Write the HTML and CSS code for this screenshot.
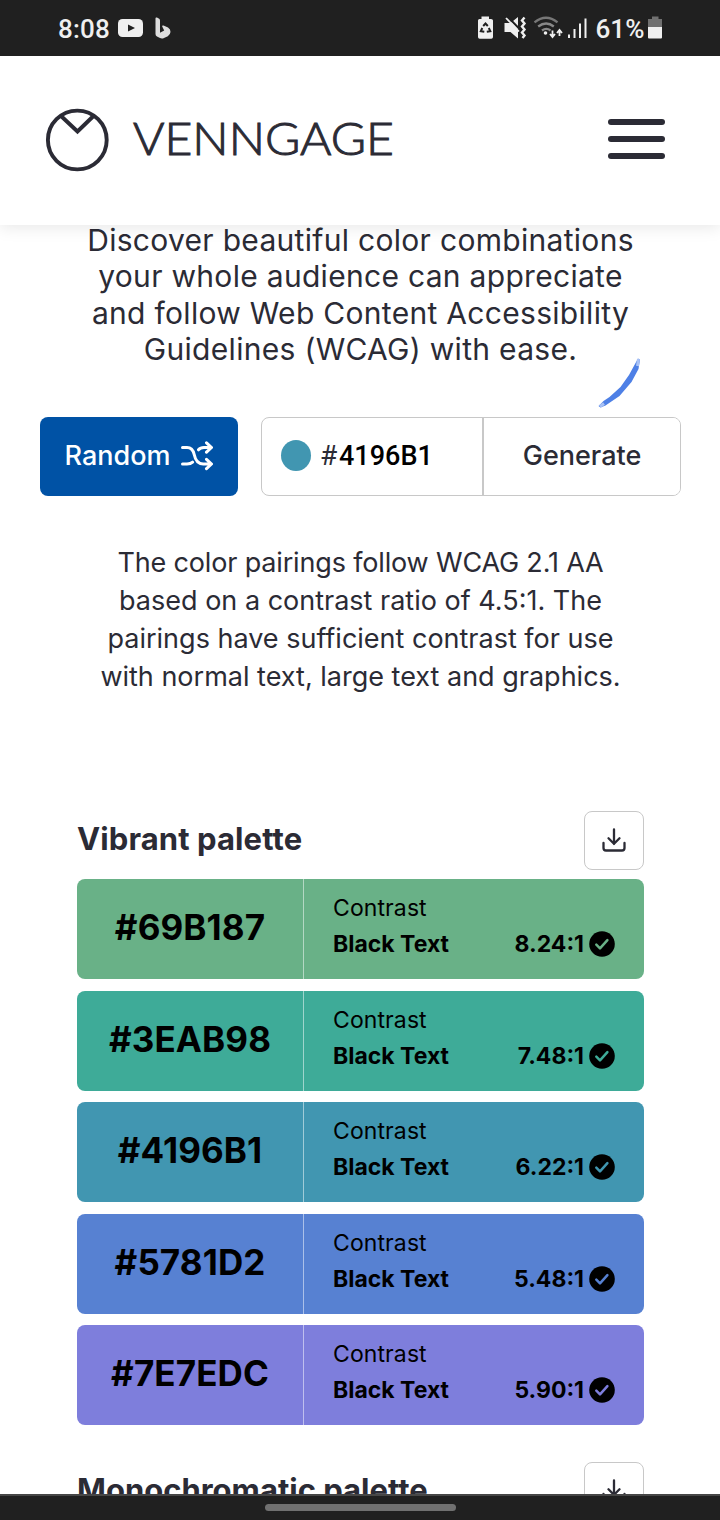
FILE: index.html
```html
<!DOCTYPE html>
<html lang="en">
<head>
<meta charset="utf-8">
<title>Accessible Color Palette Generator</title>
<link rel="stylesheet" href="styles.css">
</head>
<body>
<svg class="defs" width="0" height="0">
  <symbol id="check" viewBox="0 0 26 26"><circle cx="13" cy="13" r="12.8" fill="#000"/><path d="M7.300 13.600l3.700 3.700 7.400-8.200" fill="none" stroke="currentColor" stroke-width="2.500" stroke-linecap="round" stroke-linejoin="round"/></symbol>
  <symbol id="download" viewBox="0 0 24 24"><path d="M12 1.500V16M6.500 10.300L12 15.800l5.500-5.500M1.500 15v5q0 2.500 2.500 2.500h16q2.500 0 2.500-2.500v-5" fill="none" stroke="#2b2b35" stroke-width="2.300" stroke-linecap="round" stroke-linejoin="round"/></symbol>
</svg>
<div class="screen">
  <div class="status">
    <div class="status-left">
      <span class="clock">8:08</span>
      <svg class="yt" width="25" height="18" viewBox="0 0 25 18"><rect width="25" height="18" rx="4.500" fill="#efefef"/><path d="M10 5.500v7l7-3.500z" fill="#202020"/></svg>
      <svg class="bing" width="16" height="22" viewBox="0 0 16 22"><path d="M.5 1.500Q.5 0 2 .6l2.200 1.200Q5 2.300 5 3.500v12.200l4.200-2.300-2-3.800Q6.800 8 8.500 8.500l4.500 2q2.700 1.500 2.500 4.500-.3 2.800-2.700 4.200L9 21q-2 1-4 .1L2 19.500Q.5 18.500 .5 17z" fill="#dedede"/></svg>
    </div>
    <div class="status-right">
      <svg width="190" height="24" viewBox="476 16 190 24">
        <path d="M478 20.500q0-1.500 1.500-1.500h2v-2.500h7.500V19h2q2 0 2 1.500V37q0 1.700-1.700 1.700h-11.600Q478 38.700 478 37z" fill="#efefef"/>
        <path d="M483.200 26l2.300-2.500 2.300 2.500M482.300 28l-1.500 3.200 3.500 .6M488.800 28l1.500 3.200-3.500 .6" fill="none" stroke="#202020" stroke-width="2"/>
        <path d="M504.500 23h6l7.500-6v21.500l-7.500-6.500h-6z" fill="#efefef"/>
        <path d="M507.500 16.500l12 12.500" stroke="#202020" stroke-width="2"/>
        <path d="M506 18l13 13.500" stroke="#efefef" stroke-width="1.800"/>
        <path d="M524.500 17.500l-2.500 3 2.500 3-2.500 3 2.500 3-2.500 3 2.500 3-2 2.500" fill="none" stroke="#efefef" stroke-width="2.400"/>
        <g fill="none" stroke-width="2.300"><path d="M534.500 22.300q11.500-9 23 0" stroke="#777"/><path d="M538.200 26.500q8-6 15.600 0M542 30.500q4.500-3.300 8.500 0" stroke="#888"/></g>
        <circle cx="545.500" cy="33" r="1.800" fill="#efefef"/>
        <path d="M552.500 30.500v6M550 34l2.500 3 2.500-3M559.500 36v-5M557 33l2.500-3 2.500 3" fill="none" stroke="#efefef" stroke-width="1.800"/>
        <path d="M568 34.500h2V38h-2zM573.500 29h2v9h-2zM579 23.500h2V38h-2zM584.500 18.500h2V38h-2z" fill="#efefef"/>
        <text x="595.500" y="38" class="pct" textLength="49" lengthAdjust="spacingAndGlyphs">61%</text>
        <path d="M648 19h4v-2.500h6.500V19H662v8h-14z" fill="#707070"/><path d="M648 27h14v10.500q0 1-1 1h-12q-1 0-1-1z" fill="#efefef"/>
      </svg>
    </div>
  </div>
  <header class="header">
    <svg class="logo" width="350" height="66" viewBox="45 107 350 66">
      <circle cx="77.300" cy="140" r="29.400" fill="none" stroke="#2b2b35" stroke-width="3.900"/>
      <path d="M60.500 115.500l17 16 16.500-16" fill="none" stroke="#2b2b35" stroke-width="3.900"/>
      <text x="133" y="155" class="wordmark" textLength="261" lengthAdjust="spacingAndGlyphs">VENNGAGE</text>
    </svg>
    <div class="burger"><i></i><i></i><i></i></div>
  </header>
  <main class="main">
    <p class="intro">Discover beautiful color combinations<br>your whole audience can appreciate<br>and follow Web Content Accessibility<br>Guidelines (WCAG) with ease.
      <svg class="scribble" width="46" height="54" viewBox="596 356 46 54"><path d="M638 358.500l2 1-1.500 9.500-7 13-12 14-14 9.500-5 2-2-1.500 5-5 6-4 11-10 8.500-12z" fill="#4e80e6"/><path d="M638.500 359l-1 7M600 406.500l4-3" fill="none" stroke="#a9c2f5" stroke-width="3"/></svg>
    </p>
    <div class="controls">
      <button class="random"><span>Random</span>
        <svg width="32" height="30" viewBox="0 0 32 30" fill="none" stroke="#fff" stroke-width="3" stroke-linecap="round" stroke-linejoin="round"><path d="M1.500 6.500H6c4 0 6.200 2.500 7.200 7 1.200 6 3.500 9.500 9 9.500H30M1.500 23H6c2.500 0 4.300-.6 5.600-1.800M17.500 8.800c1.400-1.700 3-2.300 5.500-2.300h7M25.500 1.800l5 4.700-5 4.700M25.500 18.300l5 4.700-5 4.700"/></svg>
      </button>
      <div class="field">
        <div class="color"><span class="dot"></span><span class="hash">#</span><span class="hex">4196B1</span></div>
        <button class="generate">Generate</button>
      </div>
    </div>
    <p class="note"><span class="tight">The color pairings follow WCAG 2.1 AA</span><br>based on a contrast ratio of 4.5:1. The<br>pairings have sufficient contrast for use<br>with normal text, large text and graphics.</p>
    <section class="palette">
      <div class="palette-head"><h2 class="vibrant">Vibrant palette</h2><button class="dl"><svg width="24" height="24"><use href="#download"/></svg></button></div>
      <div class="rows">
        <div class="row green"><div class="code">#69B187</div><div class="info"><span class="label">Contrast</span><div class="line"><b>Black Text</b><span class="ratio">8.24:1<svg width="26" height="26"><use href="#check"/></svg></span></div></div></div>
        <div class="row teal"><div class="code">#3EAB98</div><div class="info"><span class="label">Contrast</span><div class="line"><b>Black Text</b><span class="ratio">7.48:1<svg width="26" height="26"><use href="#check"/></svg></span></div></div></div>
        <div class="row cyan"><div class="code">#4196B1</div><div class="info"><span class="label">Contrast</span><div class="line"><b>Black Text</b><span class="ratio">6.22:1<svg width="26" height="26"><use href="#check"/></svg></span></div></div></div>
        <div class="row blue"><div class="code">#5781D2</div><div class="info"><span class="label">Contrast</span><div class="line"><b>Black Text</b><span class="ratio">5.48:1<svg width="26" height="26"><use href="#check"/></svg></span></div></div></div>
        <div class="row violet"><div class="code">#7E7EDC</div><div class="info"><span class="label">Contrast</span><div class="line"><b>Black Text</b><span class="ratio">5.90:1<svg width="26" height="26"><use href="#check"/></svg></span></div></div></div>
      </div>
    </section>
    <section class="palette next">
      <div class="palette-head"><h2 class="mono">Monochromatic palette</h2><button class="dl"><svg width="24" height="24"><use href="#download"/></svg></button></div>
    </section>
  </main>
  <div class="navbar"><span class="handle"></span></div>
</div>
</body>
</html>
```
FILE: styles.css
```css
* { box-sizing: border-box; }
body { margin: 0; background: #fff; font-family: Inter, "Liberation Sans", sans-serif; color: #2b2b35; }
.defs { position: absolute; }
.screen { width: 720px; height: 1520px; overflow: hidden; display: flex; flex-direction: column; }
button { font: inherit; color: inherit; margin: 0; padding: 0; background: #fff; display: flex; align-items: center; justify-content: center; }
h2, p { margin: 0; }
svg { display: block; flex: none; }

.status { flex: none; height: 56px; background: #202020; display: flex; justify-content: space-between; padding: 0 54px 0 58px; color: #efefef; z-index: 2; }
.status-left { display: flex; align-items: center; }
.clock { font: 500 26px/56px Roboto, sans-serif; padding-top: 2px; width: 60px; letter-spacing: .2px; }
.yt { width: 25px; }
.bing { margin-left: 12px; }
.status-right { padding-top: 16px; }
.status-right svg { overflow: visible; }
.pct { font: 500 26px Roboto, sans-serif; fill: #efefef; }

.header { flex: none; height: 169px; background: #fff; display: flex; justify-content: space-between; padding: 51px 55px 0 45px; box-shadow: 0 2px 16px rgba(0, 0, 0, .1); z-index: 1; }
.wordmark { font: 300 46px Lato, sans-serif; fill: #2b2b35; stroke: #2b2b35; stroke-width: 1px; }
.burger { width: 57px; padding-top: 12px; display: flex; flex-direction: column; gap: 11.5px; }
.burger i { height: 5.7px; border-radius: 3px; background: #2b2b35; }

.main { flex: 1; min-height: 0; overflow: hidden; }
.intro { margin-top: -3px; height: 195px; text-align: center; font-size: 30px; line-height: 36.4px; letter-spacing: .3px; padding-left: 1px; position: relative; }
.scribble { position: absolute; left: 596px; top: 134px; }
.controls { display: flex; gap: 23px; padding: 0 39px 0 40px; height: 79px; font-size: 27px; font-weight: 500; }
.random { width: 198px; border: 0; border-radius: 8px; background: #0052a5; color: #fff; gap: 11px; padding-bottom: 2px; }
.field { flex: 1; display: flex; border: 1px solid #c8c8c8; border-radius: 8px; overflow: hidden; }
.color { width: 222px; border-right: 2px solid #c8c8c8; display: flex; align-items: center; padding: 0 0 2px 19px; }
.dot { width: 30px; height: 31px; border-radius: 50%; background: #4196b1; margin-right: 9px; }
.hash { font: 400 28px Roboto, sans-serif; width: 19px; }
.hex { font: 500 27px Roboto, sans-serif; color: #000; }
.generate { flex: 1; border: 0; padding-bottom: 2px; }
.note { margin-top: 48px; text-align: center; font-size: 27px; line-height: 38px; padding-left: 1px; }
.tight { letter-spacing: -.16px; }

.palette { margin-top: 115px; padding: 0 76px 0 77px; }
.palette-head { display: flex; align-items: center; justify-content: space-between; height: 59px; }
.palette-head h2 { font-size: 31px; font-weight: 700; line-height: 38px; padding-bottom: 3px; }
.vibrant { letter-spacing: .1px; }
.dl { width: 60px; height: 59px; border: 1px solid #c8c8c8; border-radius: 8px; padding: 0 0 2px; }
.rows { margin-top: 9px; display: flex; flex-direction: column; gap: 11.5px; }
.row { height: 100px; display: flex; border-radius: 8px; }
.code { width: 227px; border-right: 1px solid rgba(255, 255, 255, .5); text-align: center; font-size: 35px; font-weight: 700; line-height: 97px; letter-spacing: .1px; }
.info { flex: 1; padding: 11px 29px 0; font-size: 23px; line-height: 36px; }
.label { display: block; letter-spacing: .1px; }
.line { display: flex; justify-content: space-between; font-size: 23px; }
.line b, .ratio { font-weight: 650; }
.ratio { display: flex; align-items: center; gap: 5px; }
.green { background: #69b187; }
.teal { background: #3eab98; }
.cyan { background: #4196b1; }
.blue { background: #5781d2; }
.violet { background: #7e7edc; }
.code, .label, .line { color: #000; }
.green svg { color: #69b187; }
.teal svg { color: #3eab98; }
.cyan svg { color: #4196b1; }
.blue svg { color: #5781d2; }
.violet svg { color: #7e7edc; }
.next { margin-top: 37px; }
.navbar { flex: none; height: 26px; background: #202020; border-top: 2px solid #464646; display: flex; justify-content: center; padding-top: 8px; z-index: 2; }
.handle { width: 191px; height: 7px; border-radius: 4px; background: #707070; }
```
